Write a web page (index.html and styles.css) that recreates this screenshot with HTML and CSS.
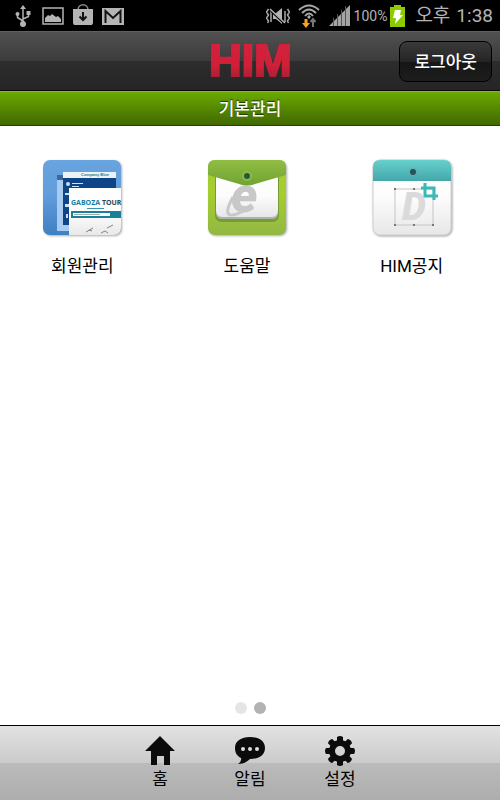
FILE: index.html
```html
<!DOCTYPE html>
<html lang="ko">
<head>
<meta charset="utf-8">
<meta name="viewport" content="width=device-width, initial-scale=1">
<title>HIM</title>
<link rel="stylesheet" href="styles.css">
</head>
<body>
<div class="status">
  <div class="status-left">
    <svg width="16" height="24" viewBox="0 0 16 24" fill="none" stroke="#b4b4b4" stroke-width="1.500" aria-hidden="true"><path d="M8 4v16M2.500 10v3.500L8 17M13.500 9v3.500L8 15"/><path d="M8 1l3 4H5z" fill="#b4b4b4" stroke="none"/><circle cx="8" cy="20" r="3" fill="#b4b4b4" stroke="none"/><circle cx="2.500" cy="10" r="2" fill="#b4b4b4" stroke="none"/><path d="M11.500 7h4v4h-4z" fill="#b4b4b4" stroke="none"/></svg>
    <svg width="22" height="24" viewBox="0 0 22 24" aria-hidden="true"><rect x="1" y="4" width="20" height="16" fill="none" stroke="#b4b4b4" stroke-width="1.500"/><path d="M3 18v-4l3-3 2 1 2-2 4 3 2-1 3 3v3z" fill="#b4b4b4"/></svg>
    <svg width="22" height="24" viewBox="0 0 22 24" aria-hidden="true"><path d="M6 6C6-1 16-1 16 6" fill="none" stroke="#8b8b8b" stroke-width="1.500"/><path d="M1 5h20v14l-1 2H2l-1-2z" fill="#b4b4b4"/><path d="M11 8v8M7.500 12.500L11 16l3.500-3.500" fill="none" stroke="#111" stroke-width="2"/></svg>
    <svg width="22" height="24" viewBox="0 0 22 24" aria-hidden="true"><rect y="4" width="22" height="17" fill="#b4b4b4"/><path d="M3.500 19V7l7.500 7 7.500-7v12" fill="none" stroke="#111" stroke-width="2"/></svg>
  </div>
  <div class="status-right">
    <svg width="24" height="24" viewBox="0 0 24 24" aria-hidden="true"><g fill="none" stroke="#aaa" stroke-width="1.500"><path d="M2.500 5l-2 3 2 3-2 3 2 3-1 2M5 7v11M21.500 5l2 3-2 3 2 3-2 3 1 2M19 7v11"/></g><path d="M7 9h3l6-5v16l-6-5H7z" fill="#b4b4b4"/><path d="M5 7l14 13" stroke="#000" stroke-width="2"/><path d="M4 5l15 14" stroke="#b4b4b4" stroke-width="1.500"/></svg>
    <svg class="wifi" width="22" height="24" viewBox="0 0 22 24" fill="none" aria-hidden="true"><path d="M1 6Q11-3 21 6M4 9Q11 2 18 9M7 12Q11 7 15 12" stroke="#a8a8a8" stroke-width="2"/><path d="M9 13l2-2 2 2-2 2z" fill="#aaa"/><path d="M6.500 15h3v4H12l-4 5-4-5h2.500z" fill="#ff9d20"/><path d="M15 23v-7M12.500 18l2.500-3 2.500 3" stroke="#777" stroke-width="2"/></svg>
    <svg width="22" height="24" viewBox="0 0 22 24" aria-hidden="true"><path d="M0 22L21 1v21z" fill="#a4a4a4"/><path d="M4.500 14v8M8.500 10v12M12.500 6v16M16.500 2v20" stroke="#555" stroke-width="1"/></svg>
    <span class="percent">100%</span>
    <svg class="battery" width="15" height="24" viewBox="0 0 15 24" aria-hidden="true"><path d="M0 3h4V1h7v2h4v20H0z" fill="#8ccb00"/><path d="M5 6h6l-1 5h3L5 20l1-6H3z" fill="#fff"/></svg>
    <span class="clock"><span>오후</span><span>1:38</span></span>
  </div>
</div>
<header class="topbar">
  <svg class="logo" width="96" height="52" viewBox="0 0 96 52" role="img" aria-label="HIM">
    <defs><linearGradient id="red" x1="0" y1="0" x2="0" y2="1"><stop offset=".25" stop-color="#d3213b"/><stop offset=".6" stop-color="#cf2038"/><stop offset=".9" stop-color="#a02032"/></linearGradient></defs>
    <text x="48" y="41" text-anchor="middle" class="logo-text" fill="url(#red)" stroke="url(#red)">HIM</text>
  </svg>
  <button class="logout" type="button">로그아웃</button>
</header>
<h1 class="title">기본관리</h1>
<main class="content">
  <nav class="apps" aria-label="기본관리">
    <a class="app" href="#members">
      <svg width="84" height="80" viewBox="0 0 84 80" aria-hidden="true">
        <defs><linearGradient id="blue" x1="0" y1="0" x2="0" y2="1"><stop stop-color="#68a4df"/><stop offset=".45" stop-color="#639ddd"/><stop offset="1" stop-color="#3f7fc2"/></linearGradient><linearGradient id="paper" x1="0" y1="0" x2="0" y2="1"><stop stop-color="#fff"/><stop offset=".5" stop-color="#fcfcfc"/><stop offset="1" stop-color="#e7e7e7"/></linearGradient><clipPath id="tile"><rect x="3" y="2" width="78" height="75" rx="7"/></clipPath></defs>
        <rect class="tile-shadow" x="3" y="2" width="78" height="75" rx="7" fill="url(#blue)"/>
        <g clip-path="url(#tile)"><path d="M17 17h12v56H17z" fill="#a7ccef"/><path d="M17 17h7v5h-7z" fill="#3c689b"/><path d="M23 14h53v53H23z" fill="#0d4587"/><path d="M23 14h53v6H23z" fill="#edf2f5"/><text x="41" y="18" class="tiny" fill="#16809f">Company Blue</text><g fill="#c9e2f4"><circle cx="28" cy="26" r="2"/><path d="M32 25h11v1H32zM32 28h7v1h-7zM25 35h4v2h-4zM25 46h4v3h-4zM26 56h2v4h-2z"/></g><path d="M29 30h55v49H29z" fill="url(#paper)"/></g>
        <text x="31" y="47" class="tour"><tspan fill="#167eaa">GABOZA</tspan><tspan fill="#304350"> TOUR</tspan></text>
        <g clip-path="url(#tile)"><path d="M47 50h17v1H47z" fill="#3696b2"/><path d="M31 53h53v7H31z" fill="#198099"/><path d="M33 55h37v3H33z" fill="#fff"/><path d="M34 56h26v1H34z" fill="#aaa"/><path d="M46 74l7-4M49 72l3 1M67 70l6-3M61 75l4-2 3 2" fill="none" stroke="#7b8790" stroke-width="1"/></g>
      </svg>
      <span>회원관리</span>
    </a>
    <a class="app" href="#help">
      <svg width="84" height="80" viewBox="0 0 84 80" aria-hidden="true">
        <defs><linearGradient id="lime" x1="0" y1="0" x2="0" y2="1"><stop stop-color="#a5cc35"/><stop offset=".45" stop-color="#a4ce2c"/><stop offset="1" stop-color="#92b844"/></linearGradient><linearGradient id="flap" x1="0" y1="0" x2="0" y2="1"><stop stop-color="#91bd43"/><stop offset="1" stop-color="#70a333"/></linearGradient></defs>
        <rect class="tile-shadow" x="3" y="2" width="78" height="75" rx="7" fill="url(#lime)"/>
        <path d="M10 17h64v40q0 7-7 7H17q-7 0-7-7z" fill="#759d34"/><path d="M11 17h62v38q0 6-6 6H17q-6 0-6-6z" fill="#aeb2ab"/><path d="M11 17h62v35q0 7-6 7H17q-6 0-6-7z" fill="url(#paper)"/>
        <text x="26" y="54" class="browser-letter">e</text><path d="M28 39c-10 18-6 23 12 13" fill="none" stroke="#c8c8c8" stroke-width="3"/>
        <path d="M3 17V9q0-7 7-7h64q7 0 7 7v8L50 26Q42 29 34 26z" fill="url(#flap)"/><circle cx="42" cy="18" r="5" fill="#8dbb4d"/><circle cx="42" cy="18" r="3" fill="#245b33"/>
      </svg>
      <span>도움말</span>
    </a>
    <a class="app" href="#notice">
      <svg width="84" height="80" viewBox="0 0 84 80" aria-hidden="true">
        <defs><linearGradient id="teal" x1="0" y1="0" x2="0" y2="1"><stop stop-color="#67d1ce"/><stop offset="1" stop-color="#44a6aa"/></linearGradient></defs>
        <rect class="tile-shadow" x="3" y="2" width="78" height="75" rx="7" fill="url(#paper)" stroke="#cfcfcf"/>
        <path d="M3 23V9q0-7 7-7h64q7 0 7 7v14z" fill="url(#teal)"/><circle cx="43" cy="14" r="4" fill="#62adb0"/><circle cx="43" cy="14" r="3" fill="#26545a"/>
        <path d="M25 31h38v36H25z" fill="none" stroke="#c5c5c5"/><text x="32" y="62" class="paper-letter">D</text><path d="M24 30h2v2h-2zM43 30h2v2h-2zM24 66h2v2h-2zM43 66h2v2h-2zM62 66h2v2h-2z" fill="#777"/>
        <path d="M55 25v13h13M51 30h13v12" fill="none" stroke="#39b9b8" stroke-width="3"/>
      </svg>
      <span>HIM공지</span>
    </a>
  </nav>
  <div class="dots" aria-hidden="true"><span class="dot"></span><span class="dot dot-current"></span></div>
</main>
<nav class="tabs" aria-label="메뉴">
  <a class="tab" href="#home"><svg width="30" height="30" viewBox="0 0 30 30" aria-hidden="true"><path d="M15 0l15 15h-5v14h-6v-9h-7v9H6V15H0z"/></svg><span>홈</span></a>
  <a class="tab" href="#alerts"><svg width="30" height="30" viewBox="0 0 30 30" aria-hidden="true"><path d="M15 1C24 1 30 5 30 12s-6 11-15 11c-3 3-7 5-12 5q4-3 3-6C2 20 0 17 0 12 0 5 6 1 15 1z"/><g fill="#ddd"><circle cx="8" cy="13" r="2"/><circle cx="15" cy="13" r="2"/><circle cx="22" cy="13" r="2"/></g></svg><span>알림</span></a>
  <a class="tab" href="#settings"><svg width="30" height="30" viewBox="-15 -15 30 30" aria-hidden="true"><circle r="8" fill="none" stroke="#0b0b0b" stroke-width="6"/><g id="teeth"><path id="tooth" d="M-3-9V-14q3-2 6 0v5z"/><use href="#tooth" transform="rotate(45)"/><use href="#tooth" transform="rotate(90)"/><use href="#tooth" transform="rotate(135)"/></g><use href="#teeth" transform="rotate(180)"/></svg><span>설정</span></a>
</nav>
</body>
</html>
```
FILE: styles.css
```css
* { box-sizing: border-box; }
body {
  margin: 0;
  min-height: 100vh;
  display: flex;
  flex-direction: column;
  background: #fff;
  color: #000;
  font: 17px/24px Roboto, "Noto Sans CJK KR", sans-serif;
}
svg { display: block; flex: none; }
a { color: inherit; text-decoration: none; }
.status {
  display: flex;
  justify-content: space-between;
  align-items: center;
  height: 31px;
  padding: 0 7px 0 15px;
  background: #000;
  color: #b4b4b4;
}
.status-left { display: flex; gap: 11px; }
.status-left svg:nth-child(n+3) { margin-left: -3px; }
.status-right { display: flex; align-items: center; }
.wifi { margin: 0 9px 0 8px; }
.percent { margin-left: 3px; font-size: 14px; }
.battery { margin: 0 10px 0 3px; }
.clock { display: flex; gap: 6px; font-size: 19px; white-space: nowrap; }
.topbar {
  display: grid;
  grid-template-columns: 1fr auto 1fr;
  align-items: center;
  height: 60px;
  padding: 0 8px;
  border-top: 1px solid #606060;
  border-bottom: 1px solid #080808;
  background: linear-gradient(#515151, #3b3b3b 50%, #2d2d2d 50%, #252525);
}
.logo { grid-column: 2; }
.logo-text { font: bold 45px "Liberation Sans", sans-serif; stroke-width: 2px; }
.logout {
  justify-self: end;
  height: 41px;
  padding: 0 14px;
  border: 1px solid #000;
  border-radius: 8px;
  background: linear-gradient(#3a3a3a, #252525 50%, #161616 50%, #1d1d1d);
  color: #fff;
  font: 500 17px/24px "Noto Sans CJK KR", sans-serif;
}
.title {
  height: 35px;
  margin: 0;
  border-top: 1px solid #87bd20;
  border-bottom: 1px solid #174900;
  background: linear-gradient(#6ba900, #416800);
  color: #fff;
  font: 500 17px/32px "Noto Sans CJK KR", sans-serif;
  text-align: center;
  text-shadow: 0 -1px 1px #183800;
}
.content {
  flex: 1;
  display: flex;
  flex-direction: column;
  justify-content: space-between;
  padding: 32px 0 11px;
}
.apps { display: grid; grid-template-columns: repeat(3, 1fr); padding-right: 6px; }
.app { display: flex; flex-direction: column; align-items: center; gap: 16px; }
.tile-shadow { filter: drop-shadow(1px 1px 1px #0005); }
.tiny { font: bold 4px "Liberation Sans", sans-serif; }
.tour { font: bold 7px "Open Sans", sans-serif; }
.browser-letter { font: italic 900 50px Roboto, sans-serif; fill: #c8c8c8; }
.paper-letter { font: italic 900 38px Roboto, sans-serif; fill: #dadada; }
.dots { display: flex; justify-content: center; gap: 7px; }
.dot { width: 12px; height: 12px; border-radius: 50%; background: #e5e5e5; }
.dot-current { background: #b3b3b3; }
.tabs {
  display: flex;
  justify-content: center;
  height: 75px;
  padding-top: 10px;
  border-top: 1px solid #000;
  background: linear-gradient(#e2e2e2, #cbcbcb 50%, #bbb 50%, #adadad);
}
.tab { width: 90px; display: flex; flex-direction: column; align-items: center; gap: 1px; fill: #0b0b0b; }
```
